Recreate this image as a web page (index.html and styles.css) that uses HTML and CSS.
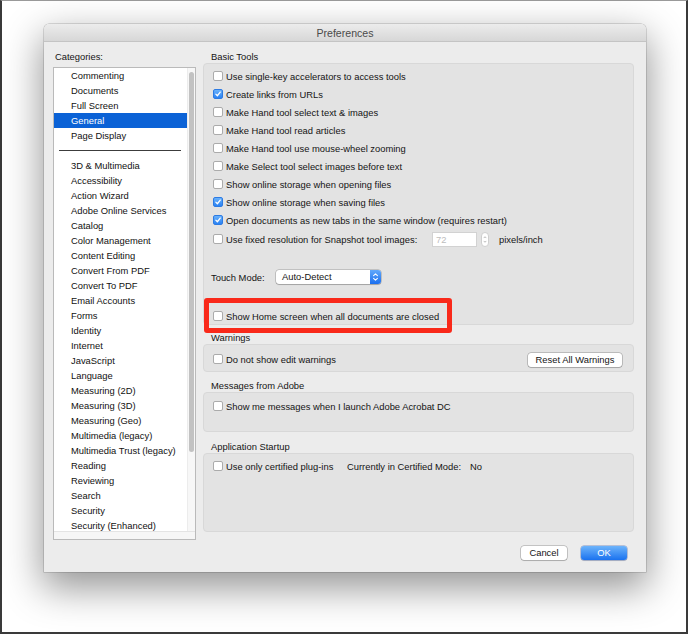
FILE: index.html
```html
<!DOCTYPE html>
<html>
<head>
<meta charset="utf-8">
<title>Preferences</title>
<link rel="stylesheet" href="styles.css">
</head>
<body>
<div class="frame">
  <div class="window">
    <div class="titlebar">Preferences</div>
    <div class="content">
      <div class="left">
        <div class="cat-label">Categories:</div>
        <div class="listbox">
          <div class="list-area">
            <ul class="list">
              <li>Commenting</li>
              <li>Documents</li>
              <li>Full Screen</li>
              <li class="sel">General</li>
              <li>Page Display</li>
              <li class="sep"><span></span></li>
              <li>3D &amp; Multimedia</li>
              <li>Accessibility</li>
              <li>Action Wizard</li>
              <li>Adobe Online Services</li>
              <li>Catalog</li>
              <li>Color Management</li>
              <li>Content Editing</li>
              <li>Convert From PDF</li>
              <li>Convert To PDF</li>
              <li>Email Accounts</li>
              <li>Forms</li>
              <li>Identity</li>
              <li>Internet</li>
              <li>JavaScript</li>
              <li>Language</li>
              <li>Measuring (2D)</li>
              <li>Measuring (3D)</li>
              <li>Measuring (Geo)</li>
              <li>Multimedia (legacy)</li>
              <li>Multimedia Trust (legacy)</li>
              <li>Reading</li>
              <li>Reviewing</li>
              <li>Search</li>
              <li>Security</li>
              <li>Security (Enhanced)</li>
            </ul>
            <div class="vscroll"><div class="thumb"></div></div>
          </div>
          <div class="hscroll"></div>
        </div>
      </div>

      <div class="right">
        <div class="sec-label">Basic Tools</div>
        <div class="group basic">
          <div class="row"><span class="cb"></span><span>Use single-key accelerators to access tools</span></div>
          <div class="row"><span class="cb on"><svg viewBox="0 0 10 10"><path d="M2.3 5.2 L4.2 7.2 L7.8 2.6" /></svg></span><span>Create links from URLs</span></div>
          <div class="row"><span class="cb"></span><span>Make Hand tool select text &amp; images</span></div>
          <div class="row"><span class="cb"></span><span>Make Hand tool read articles</span></div>
          <div class="row"><span class="cb"></span><span>Make Hand tool use mouse-wheel zooming</span></div>
          <div class="row"><span class="cb"></span><span>Make Select tool select images before text</span></div>
          <div class="row"><span class="cb"></span><span>Show online storage when opening files</span></div>
          <div class="row"><span class="cb on"><svg viewBox="0 0 10 10"><path d="M2.3 5.2 L4.2 7.2 L7.8 2.6" /></svg></span><span>Show online storage when saving files</span></div>
          <div class="row"><span class="cb on"><svg viewBox="0 0 10 10"><path d="M2.3 5.2 L4.2 7.2 L7.8 2.6" /></svg></span><span>Open documents as new tabs in the same window (requires restart)</span></div>
          <div class="row snap"><span class="cb"></span><span class="snap-label">Use fixed resolution for Snapshot tool images:</span>
            <span class="num">72</span>
            <span class="stepper"><svg viewBox="0 0 8 15"><path d="M2.3 5.6 L4 3.8 L5.7 5.6 M2.3 9.4 L4 11.2 L5.7 9.4" /></svg></span>
            <span class="unit">pixels/inch</span>
          </div>
          <div class="row touch"><span class="touch-label">Touch Mode:</span>
            <div class="select"><span class="select-text">Auto-Detect</span><span class="select-arrow"><svg viewBox="0 0 11 14"><path d="M3.6 5.6 L5.5 3.8 L7.4 5.6 M3.6 8.4 L5.5 10.2 L7.4 8.4" /></svg></span></div>
          </div>
          <div class="row home"><span class="cb"></span><span>Show Home screen when all documents are closed</span></div>
        </div>

        <div class="sec-label gap7">Warnings</div>
        <div class="group warn">
          <div class="row"><span class="cb"></span><span>Do not show edit warnings</span><span class="btn reset">Reset All Warnings</span></div>
        </div>

        <div class="sec-label gap8">Messages from Adobe</div>
        <div class="group msg">
          <div class="row"><span class="cb"></span><span>Show me messages when I launch Adobe Acrobat DC</span></div>
        </div>

        <div class="sec-label gap9">Application Startup</div>
        <div class="group startup">
          <div class="row"><span class="cb"></span><span class="plug">Use only certified plug-ins</span><span class="mode">Currently in Certified Mode:</span><span>No</span></div>
        </div>

        <div class="buttons">
          <span class="btn cancel">Cancel</span>
          <span class="btn primary">OK</span>
        </div>
      </div>
    </div>
  </div>
  <div class="highlight"></div>
</div>
</body>
</html>
```

FILE: styles.css
```css
html, body {
  margin: 0;
  padding: 0;
  background: #fff;
}

body {
  width: 690px;
  height: 635px;
  overflow: hidden;
  font-family: "Liberation Sans", Arial, sans-serif;
  font-size: 9.4px;
  color: #141414;
}

.frame {
  position: relative;
  box-sizing: border-box;
  width: 688px;
  height: 634px;
  border-left: 2px solid #3a3a3a;
  border-top: 1px solid #9a9a9a;
  border-right: 2px solid #3a3a3a;
  border-bottom: 2px solid #3a3a3a;
  padding: 23px 0 0 42px;
  background: #fff;
}

.window {
  width: 602px;
  height: 548px;
  background: #ececec;
  border-radius: 5px 5px 0 0;
  box-shadow: 0 0 0 0.5px rgba(0, 0, 0, 0.25), 0 14px 38px 2px rgba(0, 0, 0, 0.42);
  display: flex;
  flex-direction: column;
}

.titlebar {
  box-sizing: border-box;
  height: 18px;
  padding-top: 1px;
  line-height: 17px;
  border-bottom: 1px solid #c4c4c4;
  border-radius: 5px 5px 0 0;
  background: linear-gradient(#ececec, #d7d7d7);
  text-align: center;
  font-size: 10.6px;
  color: #4a4a4a;
}

.content {
  display: flex;
  gap: 7px;
  padding: 9px 12px 0 9px;
}

/* left column */
.left {
  width: 143px;
}

.cat-label {
  height: 12px;
  line-height: 12px;
  padding-left: 2px;
  margin-bottom: 4px;
}

.listbox {
  box-sizing: border-box;
  width: 143px;
  height: 473px;
  border: 1px solid #bababa;
  background: #fff;
  display: flex;
  flex-direction: column;
}

.list-area {
  display: flex;
  height: 463px;
  overflow: hidden;
}

.list {
  list-style: none;
  margin: 0;
  padding: 0;
  width: 133px;
  flex: none;
}

.list li {
  height: 15px;
  line-height: 15px;
  padding-left: 17px;
  white-space: nowrap;
  color: #111;
}

.list li.sel {
  background: #0b62d6;
  color: #fff;
}

.list li.sep {
  display: flex;
  align-items: center;
  padding: 0 6px 0 5px;
}

.list li.sep span {
  display: block;
  flex: 1;
  height: 1px;
  background: #3c3c3c;
}

.vscroll {
  box-sizing: border-box;
  width: 8px;
  flex: none;
  border-left: 1px solid #ececec;
  background: #f7f7f7;
  padding: 4px 1px 0 1px;
}

.thumb {
  height: 380px;
  border-radius: 3px;
  background: #c2c2c2;
}

.hscroll {
  flex: 1;
  border-top: 1px solid #e4e4e4;
  background: #f6f6f6;
}

/* right column */
.right {
  width: 431px;
  display: flex;
  flex-direction: column;
}

.sec-label {
  height: 12px;
  line-height: 12px;
  padding-left: 8px;
}

.gap7 { margin-top: 7px; }
.gap8 { margin-top: 8px; }
.gap9 { margin-top: 9px; }

.group {
  border: 1px solid #d8d8d8;
  border-radius: 4px;
  background: #e3e3e3;
}

.row {
  display: flex;
  align-items: center;
  height: 18px;
  padding-left: 9px;
  white-space: nowrap;
}

.cb {
  box-sizing: border-box;
  width: 10px;
  height: 10px;
  flex: none;
  margin-right: 3px;
  border: 1px solid #ababab;
  border-radius: 2px;
  background: #fff;
  display: flex;
}

.cb.on {
  border-color: #2d7be3;
  background: linear-gradient(#6ab2fb, #2a82f3);
}

.cb svg {
  width: 8px;
  height: 8px;
  fill: none;
  stroke: #fff;
  stroke-width: 1.6;
  stroke-linecap: round;
  stroke-linejoin: round;
}

/* basic tools */
.basic {
  padding-top: 3px;
}

.snap {
  margin-top: 1px;
}

.snap-label {
  width: 206px;
}

.num {
  box-sizing: border-box;
  width: 45px;
  height: 15px;
  line-height: 13px;
  border: 1px solid #d2d2d2;
  background: #fff;
  color: #bdbdbd;
  padding-left: 3px;
}

.stepper {
  box-sizing: border-box;
  width: 8px;
  height: 15px;
  margin-left: 4px;
  border: 1px solid #cfcfcf;
  border-radius: 4px;
  background: #fff;
  display: flex;
}

.stepper svg {
  width: 6px;
  height: 13px;
  fill: none;
  stroke: #9a9a9a;
  stroke-width: 0.9;
}

.unit {
  margin-left: 10px;
}

.touch {
  margin-top: 20px;
  padding-left: 7px;
}

.touch-label {
  width: 65px;
}

.select {
  display: flex;
  width: 105px;
  height: 14px;
  border-radius: 3px;
  background: #fff;
  box-shadow: 0 0 0 0.5px rgba(0, 0, 0, 0.3), 0 1px 1px rgba(0, 0, 0, 0.15);
}

.select-text {
  flex: 1;
  line-height: 14px;
  padding-left: 6px;
}

.select-arrow {
  width: 11px;
  height: 14px;
  border-radius: 0 3px 3px 0;
  background: linear-gradient(#62a9fb, #1b6fef);
  display: flex;
}

.select-arrow svg {
  width: 11px;
  height: 14px;
  fill: none;
  stroke: #fff;
  stroke-width: 1.1;
  stroke-linecap: round;
  stroke-linejoin: round;
}

.home {
  margin-top: 22px;
  height: 16px;
}

/* warnings */
.warn {
  padding: 5px 11px 3px 0;
}

.btn {
  display: inline-block;
  box-sizing: border-box;
  height: 14px;
  line-height: 14px;
  text-align: center;
  border-radius: 3px;
  background: #fff;
  box-shadow: 0 0 0 0.5px rgba(0, 0, 0, 0.35), 0 1px 1px rgba(0, 0, 0, 0.12);
  color: #141414;
}

.reset {
  width: 94px;
  margin-left: auto;
  margin-top: 2px;
}

.msg {
  padding: 4px 0 16px;
}

.startup {
  padding: 3px 0 56px;
}

.plug {
  width: 121px;
}

.mode {
  width: 123px;
}

.buttons {
  display: flex;
  justify-content: flex-end;
  gap: 14px;
  margin-top: 14px;
  padding-right: 7px;
}

.cancel {
  width: 46px;
}

.primary {
  width: 46px;
  color: #fff;
  background: linear-gradient(#6db4fb, #1a72ef);
  box-shadow: 0 0 0 0.5px rgba(0, 40, 140, 0.45), 0 1px 1px rgba(0, 0, 0, 0.12);
}

/* red annotation overlay */
.highlight {
  position: absolute;
  left: 202px;
  top: 297px;
  width: 248px;
  height: 35px;
  box-sizing: border-box;
  border: 5px solid #f9291a;
  border-radius: 3px;
}
```
